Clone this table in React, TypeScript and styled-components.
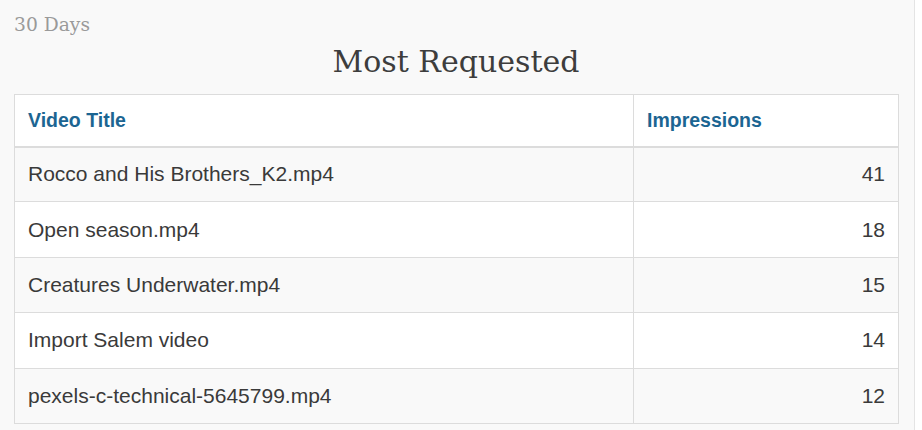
import React from 'react';
import styled, { createGlobalStyle } from 'styled-components';

type VideoRow = { title: string; impressions: number };

const rows: VideoRow[] = [
  { title: 'Rocco and His Brothers_K2.mp4', impressions: 41 },
  { title: 'Open season.mp4', impressions: 18 },
  { title: 'Creatures Underwater.mp4', impressions: 15 },
  { title: 'Import Salem video', impressions: 14 },
  { title: 'pexels-c-technical-5645799.mp4', impressions: 12 },
];

const GlobalStyle = createGlobalStyle`
  body {
    margin: 0;
    background: #ffffff;
    font-family: "Liberation Sans", Arial, sans-serif;
  }
`;

const App: React.FC = () => {
  return (
    <>
      <GlobalStyle />
      <Panel>
        <Period>30 Days</Period>
        <Heading>Most Requested</Heading>
        <Table>
          <thead>
            <tr>
              <HeadCell>Video Title</HeadCell>
              <HeadCell $narrow>Impressions</HeadCell>
            </tr>
          </thead>
          <tbody>
            {rows.map((row, i) => (
              <Row key={row.title} $striped={i % 2 === 0}>
                <Cell>{row.title}</Cell>
                <Cell $numeric>{row.impressions}</Cell>
              </Row>
            ))}
          </tbody>
        </Table>
      </Panel>
    </>
  );
};

const Panel = styled.div`
  width: 915px;
  box-sizing: border-box;
  min-height: 430px;
  background: #f9f9f9;
  border-right: 1px solid #e4e4e4;
  padding: 14px 16px 0 14px;
`;

const Period = styled.div`
  font-family: "DejaVu Serif", "Liberation Serif", serif;
  font-size: 18.7px;
  line-height: 22px;
  color: #9a9a9a;
`;

const Heading = styled.h2`
  margin: 5px 0 11px;
  text-align: center;
  font-family: "DejaVu Serif", "Liberation Serif", serif;
  font-weight: 400;
  font-size: 30px;
  line-height: 42px;
  height: 42px;
  color: #3d3d3d;
`;

const Table = styled.table`
  width: 885px;
  border-collapse: collapse;
  background: #ffffff;
  border: 1px solid #dcdcdc;
  table-layout: fixed;
`;

const HeadCell = styled.th<{ $narrow?: boolean }>`
  width: ${p => (p.$narrow ? '265px' : 'auto')};
  height: 52px;
  padding: 0 13px;
  text-align: left;
  font-size: 19.5px;
  font-weight: 700;
  color: #1c6592;
  border-left: 1px solid #dcdcdc;
  border-bottom: 2px solid #dcdcdc;
  box-sizing: border-box;
`;

const Row = styled.tr<{ $striped: boolean }>`
  background: ${p => (p.$striped ? '#f9f9f9' : '#ffffff')};
`;

const Cell = styled.td<{ $numeric?: boolean }>`
  height: 55.4px;
  padding: 0 13px;
  font-size: 21px;
  color: #3a3a3a;
  text-align: ${p => (p.$numeric ? 'right' : 'left')};
  border-left: 1px solid #dcdcdc;
  border-bottom: 1px solid #dcdcdc;
  box-sizing: border-box;
`;

export default App;
